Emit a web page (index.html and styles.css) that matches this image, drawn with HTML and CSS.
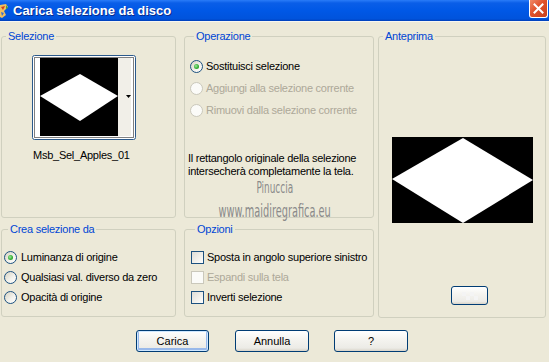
FILE: index.html
```html
<!DOCTYPE html>
<html lang="it">
<head>
    <meta charset="UTF-8">
    <title>Carica selezione da disco</title>
    <link rel="stylesheet" href="styles.css">
</head>
<body>
    <header class="titlebar">
        <svg class="app-icon" width="9" height="16" viewBox="0 0 9 16">
            <path d="M0 2 L6 1 L8 4 L4 8 L6 12 L2 15 L0 14 Z" fill="#f0c060"/>
            <path d="M1 4 L5 3 L3 7 Z" fill="#d04020"/>
            <path d="M1 9 L4 10 L2 13 Z" fill="#3a70d0"/>
            <path d="M6 2 L8 5 L6 6 Z" fill="#40a040"/>
        </svg>
        <span class="title">Carica selezione da disco</span>
        <button class="close" type="button">
            <svg width="11" height="11" viewBox="0 0 11 11"><path d="M1.5 1.5 L9.5 9.5 M9.5 1.5 L1.5 9.5" stroke="#fff" stroke-width="2" stroke-linecap="square"/></svg>
        </button>
    </header>

    <main class="dialog">
        <div class="panels">
            <div class="left-grid">
                <fieldset class="group group-sel">
                    <legend>Selezione</legend>
                    <div class="thumb-col">
                        <svg class="thumb" width="104" height="85" viewBox="0 0 104 85">
                            <rect x="0.5" y="0.5" width="103" height="84" rx="2" fill="#fff" stroke="#2c5a8c"/>
                            <rect x="2.5" y="2.5" width="99" height="80" fill="none" stroke="#000" stroke-dasharray="1 1"/>
                            <rect x="8" y="3" width="78" height="78" fill="#000"/>
                            <rect x="86" y="3" width="13" height="78" fill="#f1efe8"/>
                            <polygon points="8,41 48,19 86,41 48,66" fill="#fff"/>
                            <polygon points="94,40 99,40 96.5,43" fill="#000"/>
                        </svg>
                        <div class="thumb-name">Msb_Sel_Apples_01</div>
                    </div>
                </fieldset>

                <fieldset class="group group-op">
                    <legend>Operazione</legend>
                    <label class="row"><span class="radio checked"></span>Sostituisci selezione</label>
                    <label class="row disabled"><span class="radio"></span>Aggiungi alla selezione corrente</label>
                    <label class="row disabled"><span class="radio"></span>Rimuovi dalla selezione corrente</label>
                    <p class="info">Il rettangolo originale della selezione<br>intersecherà completamente la tela.</p>
                    <div class="watermark">
                        <span class="wm-name">Pinuccia</span>
                        <span class="wm-url">www.maidiregrafica.eu</span>
                    </div>
                </fieldset>

                <fieldset class="group group-crea">
                    <legend>Crea selezione da</legend>
                    <label class="row short"><span class="radio checked"></span>Luminanza di origine</label>
                    <label class="row short"><span class="radio"></span>Qualsiasi val. diverso da zero</label>
                    <label class="row short"><span class="radio"></span>Opacità di origine</label>
                </fieldset>

                <fieldset class="group group-opz">
                    <legend>Opzioni</legend>
                    <label class="row short"><span class="check"></span>Sposta in angolo superiore sinistro</label>
                    <label class="row short disabled"><span class="check"></span>Espandi sulla tela</label>
                    <label class="row short"><span class="check"></span>Inverti selezione</label>
                </fieldset>
            </div>

            <fieldset class="group group-preview">
                <legend>Anteprima</legend>
                <svg class="preview" width="141" height="86" viewBox="0 0 141 86">
                    <rect width="141" height="86" fill="#000"/>
                    <polygon points="0,42 71,1 141,43 71,86" fill="#fff"/>
                </svg>
                <button class="xp-btn preview-btn" type="button">
                    <svg width="16" height="8" viewBox="0 0 16 8">
                        <rect x="0" y="0" width="4" height="4" fill="#f4f4f4"/>
                        <rect x="8" y="0" width="4" height="4" fill="#f4f4f4"/>
                        <rect x="4" y="4" width="4" height="4" fill="#f4f4f4"/>
                        <rect x="12" y="4" width="4" height="4" fill="#f4f4f4"/>
                    </svg>
                </button>
            </fieldset>
        </div>

        <div class="buttons">
            <button class="xp-btn default" type="button">Carica</button>
            <button class="xp-btn" type="button">Annulla</button>
            <button class="xp-btn" type="button">?</button>
        </div>
    </main>
</body>
</html>
```

FILE: styles.css
```css
/* Finestra stile XP */
body {
    margin: 0;
    width: 549px;
    height: 362px;
    overflow: hidden;
    background-color: #ece9d8;
    font-family: "Liberation Sans", Arial, sans-serif;
    font-size: 11px;
    letter-spacing: -0.25px;
    color: #000;
}

/* Barra del titolo */
.titlebar {
    height: 22px;
    display: flex;
    align-items: center;
    background: linear-gradient(#2a7cf8 0, #0a5ee8 3px, #0058e6 50%, #0053dc 90%, #003fb8 100%);
    border-bottom: 1px solid #f7f6f1;
    box-sizing: border-box;
}

.app-icon {
    flex: none;
}

.title {
    margin-left: 4px;
    color: #fff;
    font-weight: bold;
    font-size: 13px;
    letter-spacing: 0;
    text-shadow: 1px 1px #0a2c8c;
}

.close {
    margin-left: auto;
    margin-right: 1px;
    align-self: flex-start;
    width: 19px;
    height: 18px;
    padding: 0;
    display: flex;
    align-items: center;
    justify-content: center;
    background: linear-gradient(135deg, #f08a68 0, #e0512c 45%, #c8401c 100%);
    border: 1px solid #fff;
    border-top: none;
    border-radius: 0 0 3px 3px;
}

/* Contenuto del dialogo */
.dialog {
    padding: 8px 3px 0 1px;
}

.panels {
    display: flex;
    gap: 4px;
}

.left-grid {
    display: grid;
    grid-template-columns: 175px 190px;
    grid-template-rows: 188px 94px;
    column-gap: 8px;
    row-gap: 5px;
}

.group {
    margin: 0;
    padding: 0;
    min-width: 0;
    border: 1px solid #d0d0bf;
    border-radius: 3px;
    box-sizing: border-box;
}

.group legend {
    margin-left: 4px;
    padding: 0 2px;
    color: #0046d5;
    line-height: 13px;
}

/* Selezione */
.thumb-col {
    width: 104px;
    margin: 12px 0 0 30px;
}

.thumb {
    display: block;
}

.thumb-name {
    margin-top: 9px;
    padding-left: 1px;
    line-height: 13px;
}

/* Righe con radio e caselle */
.row {
    display: flex;
    align-items: center;
    gap: 3px;
    height: 22px;
    white-space: nowrap;
}

.row.short {
    height: 20px;
}

.row.disabled {
    color: #aca899;
}

.group-op {
    position: relative;
    padding-left: 5px;
}

.group-op .row:first-of-type {
    margin-top: 12px;
}

.group-crea {
    padding-left: 2px;
}

.group-crea .row {
    gap: 4px;
}

.group-crea .row:first-of-type,
.group-opz .row:first-of-type {
    margin-top: 11px;
}

.group-opz {
    padding-left: 6px;
}

.radio {
    flex: none;
    width: 13px;
    height: 13px;
    box-sizing: border-box;
    border: 1px solid #1c5180;
    border-radius: 50%;
    background: linear-gradient(135deg, #d6d2c2 0, #f4f3ee 60%, #fff 100%);
    display: flex;
    align-items: center;
    justify-content: center;
}

.radio.checked::after {
    content: "";
    width: 5px;
    height: 5px;
    border-radius: 50%;
    background: radial-gradient(circle at 40% 40%, #9fe89f 0, #35b035 55%, #1a8f1a 100%);
}

.disabled .radio,
.disabled .check {
    border-color: #cac8bb;
    background: #fbfbf8;
}

.check {
    flex: none;
    width: 13px;
    height: 13px;
    box-sizing: border-box;
    border: 1px solid #1c5180;
    background: linear-gradient(135deg, #dcdcd7 0, #f0efea 55%, #fff 100%);
}

.info {
    margin: 31px 0 0 -2px;
    line-height: 13px;
}

/* Filigrana sopra il riquadro */
.watermark {
    position: absolute;
    left: 40px;
    top: 138px;
    width: 100px;
    display: flex;
    flex-direction: column;
    align-items: center;
    color: #8a8a8a;
    font-family: "DejaVu Sans Condensed", "Liberation Sans Narrow", sans-serif;
    letter-spacing: 0;
    line-height: 1;
}

.wm-name {
    font-size: 15px;
    transform: scaleX(0.66);
}

.wm-url {
    margin-top: 7px;
    font-size: 17px;
    transform: scaleX(0.64);
}

/* Anteprima */
.group-preview {
    width: 168px;
    height: 288px;
}

.preview {
    display: block;
    margin: 94px auto 0;
}

.preview-btn {
    display: flex;
    align-items: center;
    justify-content: center;
    width: 37px;
    height: 19px;
    margin: 63px 0 0 72px;
    padding: 0;
}

/* Pulsanti */
.xp-btn {
    font-family: inherit;
    font-size: 11px;
    color: #000;
    background: linear-gradient(#fff 0, #f5f4f0 40%, #ecebe6 85%, #d8d3c8 100%);
    border: 1px solid #003c74;
    border-radius: 3px;
    box-sizing: border-box;
}

.buttons {
    display: flex;
    gap: 26px;
    margin-top: 12px;
    padding-left: 135px;
}

.buttons .xp-btn {
    width: 74px;
    height: 22px;
    padding: 0;
}

.buttons .xp-btn:nth-child(3) {
    margin-left: -1px;
}

.xp-btn.default {
    width: 73px;
    box-shadow: inset 0 0 0 1px #cee7ff, inset 0 -1px 0 2px #98b8ea;
}
```
